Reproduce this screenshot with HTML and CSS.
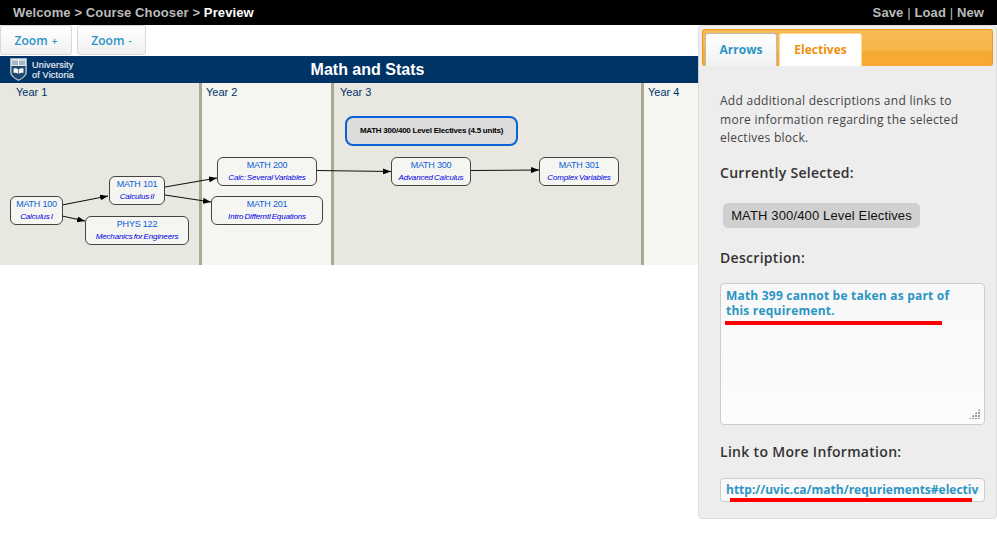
FILE: index.html
```html
<!DOCTYPE html>
<html lang="en">
<head>
  <meta charset="UTF-8">
  <meta name="viewport" content="width=device-width, initial-scale=1.0">
  <title>Course Chooser - Preview</title>
  <link rel="stylesheet" href="styles.css">
</head>
<body>
  <div class="topbar">
    <div class="crumbs">Welcome &gt; Course Chooser &gt; <span class="here">Preview</span></div>
    <div class="actions">Save <i>|</i> Load <i>|</i> New</div>
  </div>

  <div class="main">
    <div class="left">
      <div class="toolbar">
        <button class="zoom">Zoom <small>+</small></button>
        <button class="zoom">Zoom <small>-</small></button>
      </div>

      <div class="chart">
        <div class="banner">
          <div class="logo">
            <svg width="17" height="23" viewBox="0 0 17 23">
              <path d="M0.500 0.500H16.500V14C16.500 18 12 21 8.500 22.500C5 21 0.500 18 0.500 14Z" fill="#c9d3dc" stroke="#9fb0bf"/>
              <rect x="1.500" y="1.500" width="14" height="6" fill="#f4f6f8"/>
              <path d="M3 2.500V7M5 2.500V7M7 2.500V7M10 2.500V7M12 2.500V7M14 2.500V7" stroke="#5d7890"/>
              <path d="M1.500 8H15.500V14C15.500 17.500 12 20 8.500 21.500C5 20 1.500 17.500 1.500 14Z" fill="#1f4870"/>
              <path d="M3.500 10.500C5 10 7 10.500 8.500 11.500C10 10.500 12 10 13.500 10.500V15C12 14.500 10 15 8.500 16C7 15 5 14.500 3.500 15Z" fill="#f4f6f8"/>
              <path d="M8.500 11.500V16" stroke="#1f4870" stroke-width="0.700"/>
            </svg>
            <div class="logo-text">University<br>of Victoria</div>
          </div>
          <div class="chart-title">Math and Stats</div>
        </div>

        <div class="years">
          <div class="year y1">Year 1</div>
          <div class="year y2">Year 2</div>
          <div class="year y3">Year 3</div>
          <div class="year y4">Year 4</div>

          <svg class="arrows" width="698" height="182" viewBox="0 0 698 182">
            <defs>
              <marker id="head" markerWidth="8" markerHeight="6" refX="8" refY="3" orient="auto" markerUnits="userSpaceOnUse">
                <path d="M0 0L8 3L0 6Z" fill="#000"/>
              </marker>
            </defs>
            <g stroke="#111" stroke-width="1.100" fill="none">
              <line x1="62" y1="122" x2="108" y2="113" marker-end="url(#head)"/>
              <line x1="62" y1="133" x2="85" y2="138" marker-end="url(#head)"/>
              <line x1="165" y1="104" x2="217" y2="95" marker-end="url(#head)"/>
              <line x1="165" y1="112" x2="211" y2="119" marker-end="url(#head)"/>
              <line x1="317" y1="87.500" x2="391" y2="88.500" marker-end="url(#head)"/>
              <line x1="471" y1="87.500" x2="539" y2="87" marker-end="url(#head)"/>
            </g>
          </svg>

          <div class="block">MATH 300/400 Level Electives (4.5 units)</div>

          <div class="course math100"><b>MATH 100</b><em>Calculus I</em></div>
          <div class="course math101"><b>MATH 101</b><em>Calculus II</em></div>
          <div class="course phys122"><b>PHYS 122</b><em>Mechanics for Engineers</em></div>
          <div class="course math200"><b>MATH 200</b><em>Calc: Several Variables</em></div>
          <div class="course math201"><b>MATH 201</b><em>Intro Differntl Equations</em></div>
          <div class="course math300"><b>MATH 300</b><em>Advanced Calculus</em></div>
          <div class="course math301"><b>MATH 301</b><em>Complex Variables</em></div>
        </div>
      </div>
    </div>

    <div class="panel">
      <div class="tabs">
        <div class="tab">Arrows</div>
        <div class="tab active">Electives</div>
      </div>
      <div class="panel-body">
        <p class="intro">Add additional descriptions and links to more information regarding the selected electives block.</p>
        <h4>Currently Selected:</h4>
        <div class="selected">MATH 300/400 Level Electives</div>
        <h4>Description:</h4>
        <div class="field">
          <textarea class="desc">Math 399 cannot be taken as part of this requirement.</textarea>
          <span class="grip"></span>
          <span class="mark mark-desc"></span>
        </div>
        <h4>Link to More Information:</h4>
        <div class="field field-link">
          <input class="link" type="text" value="http://uvic.ca/math/requriements#electives">
          <span class="mark mark-link"></span>
        </div>
      </div>
    </div>
  </div>
</body>
</html>
```

FILE: styles.css
```css
*{
	box-sizing: border-box;
}
body{
	margin: 0;
	height: 539px;
	overflow: hidden;
	background-color: #fff;
	font-family: "Liberation Sans", Arial, sans-serif;
}

/* top bar */
.topbar{
	display: flex;
	justify-content: space-between;
	align-items: center;
	height: 25px;
	padding: 0 13px;
	background-color: #000;
	color: #bbb;
	font-size: 13px;
	font-weight: bold;
	letter-spacing: 0.12px;
}
.topbar .here{
	color: #fff;
}
.topbar i{
	font-style: normal;
	font-weight: normal;
}

.main{
	display: flex;
	align-items: flex-start;
}
.left{
	width: 698px;
}

/* zoom buttons */
.toolbar{
	display: flex;
	gap: 5px;
	height: 31px;
}
.zoom{
	width: 72px;
	height: 30px;
	padding: 0;
	border: 1px solid #d8d8d8;
	border-radius: 3px;
	background: linear-gradient(#fff, #f1f1f1);
	color: #2b95c5;
	font-family: "Open Sans", sans-serif;
	font-size: 12px;
	font-weight: 600;
}
.zoom + .zoom{
	width: 69px;
}
.zoom small{
	margin-left: 1px;
	font-size: 10px;
}

/* chart */
.banner{
	position: relative;
	display: flex;
	align-items: center;
	justify-content: center;
	height: 27px;
	background-color: #003366;
	box-shadow: 0 1px 1px #8a8a78;
}
.logo{
	position: absolute;
	left: 10px;
	top: 2px;
	display: flex;
	gap: 5px;
}
.logo-text{
	color: #e8edf2;
	font-size: 9px;
	line-height: 10px;
	letter-spacing: 0.2px;
	padding-top: 2px;
	-webkit-text-stroke: 0.2px #e8edf2;
}
.chart-title{
	color: #fff;
	font-size: 16px;
	font-weight: bold;
	margin-left: 37px;
}
.years{
	position: relative;
	display: flex;
	height: 182px;
}
.year{
	padding: 3px 0 0 16px;
	color: #003366;
	font-size: 11px;
	border-right: 3px solid #a9a995;
}
.y1{
	width: 202px;
	background-color: #e8e8e1;
}
.y2{
	width: 132px;
	padding-left: 4px;
	background-color: #f5f5f1;
}
.y3{
	width: 310px;
	padding-left: 6px;
	background-color: #e8e8e1;
}
.y4{
	width: 54px;
	padding-left: 4px;
	border-right: 0;
	background-color: #f5f5f1;
}
.arrows{
	position: absolute;
	left: 0;
	top: 0;
}

/* nodes */
.course{
	position: absolute;
	height: 29px;
	padding-top: 1px;
	border: 1px solid #444;
	border-radius: 6px;
	background-color: #f5f5f1;
	text-align: center;
	white-space: nowrap;
}
.course b{
	display: block;
	color: #0b5ed7;
	font-size: 9px;
	font-weight: normal;
	line-height: 12px;
	letter-spacing: -0.2px;
}
.course em{
	display: block;
	color: #0000e6;
	font-size: 8px;
	line-height: 13px;
	letter-spacing: -0.15px;
	word-spacing: -1px;
}
.math100{ left: 10px; top: 113px; width: 53px; }
.math101{ left: 109px; top: 93px; width: 56px; }
.phys122{ left: 85px; top: 133px; width: 104px; }
.math200{ left: 217px; top: 74px; width: 100px; }
.math201{ left: 211px; top: 113px; width: 112px; }
.math300{ left: 391px; top: 74px; width: 80px; }
.math301{ left: 539px; top: 74px; width: 80px; }
.block{
	position: absolute;
	left: 345px;
	top: 33px;
	width: 173px;
	height: 30px;
	border: 2px solid #0b62d8;
	border-radius: 8px;
	background-color: #dcdcdc;
	color: #000;
	font-size: 8px;
	font-weight: bold;
	line-height: 26px;
	letter-spacing: -0.25px;
	text-align: center;
	white-space: nowrap;
}

/* side panel */
.panel{
	width: 299px;
	height: 494px;
	padding: 3px 3px 0 3px;
	border: 1px solid #ddd;
	border-radius: 4px;
	background-color: #ededed;
	font-family: "Open Sans", sans-serif;
	color: #333;
}
.tabs{
	display: flex;
	align-items: flex-end;
	gap: 2px;
	height: 37px;
	padding-left: 2px;
	border: 1px solid #ee9b1c;
	border-bottom: 0;
	border-radius: 3px;
	background: linear-gradient(#f7bb55, #f7b648 55%, #f6aa33 60%);
}
.tab{
	width: 72px;
	height: 33px;
	border: 1px solid #bbb;
	border-bottom: 0;
	border-radius: 3px 3px 0 0;
	background: linear-gradient(#fff, #f1f1f1);
	color: #2b95c5;
	font-size: 12px;
	font-weight: bold;
	line-height: 31px;
	text-align: center;
}
.tab.active{
	width: 83px;
	border-color: #ffd98f;
	background: #fff;
	color: #ef8f0a;
}
.panel-body{
	padding: 26px 8px 0 18px;
}
.intro{
	margin: 0 0 15.5px;
	font-size: 12px;
	line-height: 18.5px;
	letter-spacing: 0.28px;
	color: #444;
}
h4{
	margin: 0;
	font-size: 14px;
	font-weight: 600;
	line-height: 20px;
	letter-spacing: 0.3px;
}
.selected{
	width: 197px;
	height: 25px;
	margin: 20px 0 20px 3px;
	border-radius: 5px;
	background-color: #d0d0d0;
	color: #111;
	font-family: "Liberation Sans", sans-serif;
	font-size: 13px;
	line-height: 25px;
	letter-spacing: 0.14px;
	text-align: center;
}
.field{
	position: relative;
	margin: 15px 0 17px;
}
.field-link{
	margin-top: 16px;
}
.desc,.link{
	display: block;
	width: 265px;
	border: 1px solid #ccc;
	border-radius: 4px;
	background: linear-gradient(#f8f8f8, #fcfcfc);
	color: #2b95c5;
	font-family: "Open Sans", sans-serif;
	font-size: 12px;
	font-weight: bold;
	outline: none;
}
.desc{
	height: 142px;
	padding: 4px 28px 3px 5px;
	line-height: 15px;
	letter-spacing: 0.2px;
	resize: none;
}
.link{
	height: 24px;
	padding: 0 5px 2px;
}
.grip{
	position: absolute;
	right: 5px;
	bottom: 6px;
	width: 11px;
	height: 10px;
	background-image: radial-gradient(circle at 1px 1px, #999 0.8px, transparent 1px);
	background-size: 3px 3px;
	clip-path: polygon(100% 0, 100% 100%, 0 100%);
}
.mark{
	position: absolute;
	background-color: #f00;
}
.mark-desc{
	left: 5px;
	top: 38px;
	width: 217px;
	height: 4px;
}
.mark-link{
	left: 10px;
	top: 20px;
	width: 242px;
	height: 4px;
}
```
